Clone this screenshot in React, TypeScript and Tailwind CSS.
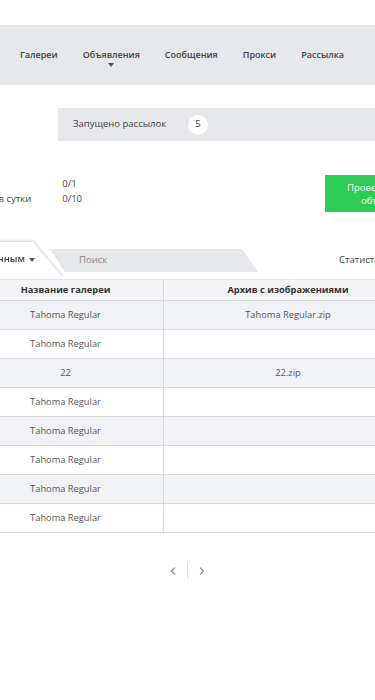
import { ChevronLeft, ChevronRight } from "lucide-react";

const rows = [
  { name: "Tahoma Regular", file: "Tahoma Regular.zip" },
  { name: "Tahoma Regular", file: "" },
  { name: "22", file: "22.zip" },
  { name: "Tahoma Regular", file: "" },
  { name: "Tahoma Regular", file: "" },
  { name: "Tahoma Regular", file: "" },
  { name: "Tahoma Regular", file: "" },
  { name: "Tahoma Regular", file: "" },
];

export default function App() {
  return (
    <div className="w-[375px] h-[700px] overflow-hidden bg-white pt-[25px] font-['Open_Sans',sans-serif] text-[#444]">
      {/* Nav */}
      <nav className="h-[60px] bg-[#e6e7ea] flex items-center pl-[20px] gap-[25px] text-[9px] font-semibold whitespace-nowrap">
        <span>Галереи</span>
        <span className="relative">
          Объявления
          <span className="absolute left-1/2 -translate-x-1/2 top-[15px] w-0 h-0 border-l-[3px] border-r-[3px] border-t-[4px] border-l-transparent border-r-transparent border-t-[#555]" />
        </span>
        <span>Сообщения</span>
        <span>Прокси</span>
        <span>Рассылка</span>
      </nav>

      {/* Mailing counter */}
      <div className="mt-[23px] ml-[58px] h-[33px] bg-[#e6e7ea] flex items-center pl-[15px] text-[9.5px] whitespace-nowrap">
        <span>Запущено рассылок</span>
        <span className="ml-[22px] w-[20px] h-[20px] rounded-full bg-white flex items-center justify-center text-[9.5px]">5</span>
      </div>

      {/* Limits + button */}
      <div className="mt-[34px] flex items-start w-[375px]">
        <div className="flex gap-[31px] -ml-[94px] mt-[1px] text-[9.5px] leading-[15px] whitespace-nowrap">
          <div className="flex flex-col">
            <span>Лимит рассылок</span>
            <span>Лимит объявлений в сутки</span>
          </div>
          <div className="flex flex-col">
            <span>0/1</span>
            <span>0/10</span>
          </div>
        </div>
        <button className="ml-auto -mr-[60px] shrink-0 w-[110px] h-[37px] bg-[#2ecc57] text-white text-[9.5px] leading-[13px] text-left pl-[22px] whitespace-nowrap">
          <div>Проверить все</div>
          <div className="pl-[14px]">объявления</div>
        </button>
      </div>

      {/* Tabs */}
      <div className="mt-[30px] h-[36px] flex items-start whitespace-nowrap">
        <div className="-ml-[60px] shrink-0 drop-shadow-[0_-1px_1.5px_rgba(0,0,0,0.2)]">
          <div className="w-[123px] h-[36px] bg-white [clip-path:polygon(0_0,93px_0,100%_100%,0_100%)] flex items-center justify-end pr-[28px] text-[9.5px] font-semibold pb-[1px]">
            По отправленным
            <span className="ml-[4px] w-0 h-0 border-l-[3px] border-r-[3px] border-t-[4px] border-l-transparent border-r-transparent border-t-[#555]" />
          </div>
        </div>
        <div className="-ml-[13px] mt-[7px] shrink-0 w-[208px] h-[23px] bg-[#e6e7ea] [clip-path:polygon(0_0,192px_0,100%_100%,15px_100%)] flex items-center pl-[29px] text-[9.5px] text-[#888]">
          Поиск
        </div>
        <div className="ml-[81px] mt-[11px] text-[9.5px] text-[#444] shrink-0">Статистика</div>
      </div>

      {/* Table */}
      <div className="-ml-[32px] w-[444px] border-t border-[#e4e4e4] mt-[1px]">
        <div className="flex h-[21px] bg-[#f4f5f8] border-b border-[#d9d9d9] text-[9.3px] font-bold text-[#333]">
          <div className="w-[196px] border-r border-[#d9d9d9] flex items-center justify-center">Название галереи</div>
          <div className="flex-1 flex items-center justify-center">Архив с изображениями</div>
        </div>
        {rows.map((r, i) => (
          <div
            key={i}
            className={`flex h-[29px] border-b border-[#d9d9d9] text-[9.3px] text-[#555] ${i % 2 === 0 ? "bg-[#f1f2f6]" : "bg-white"}`}
          >
            <div className="w-[196px] border-r border-[#d9d9d9] flex items-center justify-center">{r.name}</div>
            <div className="flex-1 flex items-center justify-center">{r.file}</div>
          </div>
        ))}
      </div>

      {/* Pagination */}
      <div className="mt-[30px] flex items-center justify-center gap-[8px] text-[#999]">
        <ChevronLeft size={12} strokeWidth={3} />
        <span className="w-px h-[16px] bg-[#ddd]" />
        <ChevronRight size={12} strokeWidth={3} />
      </div>
    </div>
  );
}
